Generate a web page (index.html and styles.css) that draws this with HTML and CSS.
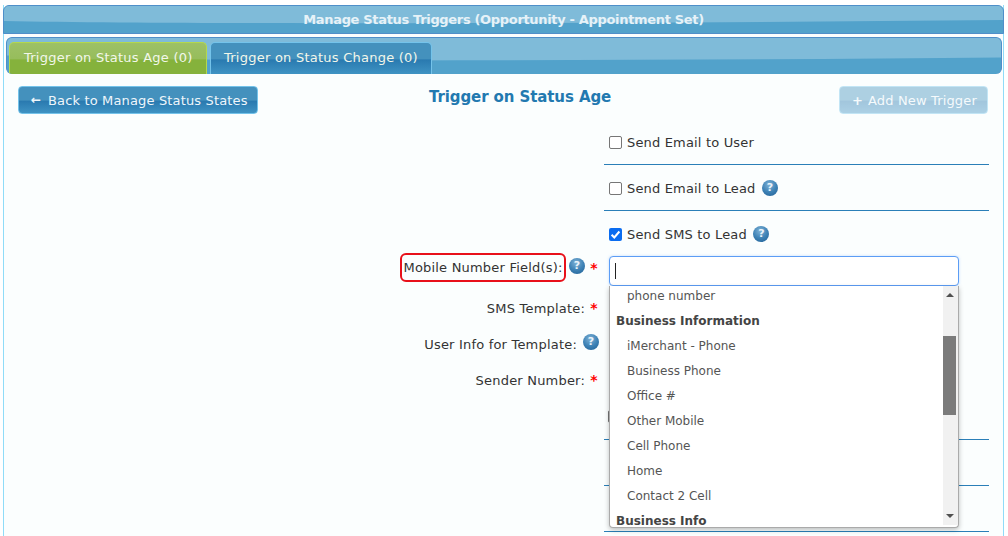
FILE: index.html
```html
<!DOCTYPE html>
<html lang="en">
<head>
<meta charset="utf-8">
<title>Manage Status Triggers</title>
<link rel="stylesheet" href="styles.css">
</head>
<body>
<div class="window">
  <div class="title-bar gloss">
    <svg class="wave" viewBox="0 0 1000 29" preserveAspectRatio="none"><path d="M0 0H1000V15C800 17 600 18.5 400 18.5C250 18.5 100 18 0 16Z" fill="#7fbbd9"/></svg>
    <span class="title-text">Manage Status Triggers (Opportunity - Appointment Set)</span>
  </div>
  <div class="panel">
    <div class="tabs gloss">
      <svg class="wave" viewBox="0 0 995 37" preserveAspectRatio="none"><path d="M0 0H995V20C800 22 600 23 400 23C250 23 100 22 0 18Z" fill="#7fbbd9"/></svg>
      <a class="tab tab-active">Trigger on Status Age (0)</a>
      <a class="tab tab-idle">Trigger on Status Change (0)</a>
    </div>
    <div class="toolbar">
      <a class="btn btn-back"><span class="btn-icon">←</span>Back to Manage Status States</a>
      <h2 class="section-title">Trigger on Status Age</h2>
      <a class="btn btn-add"><span class="btn-icon btn-plus">+</span>Add New Trigger</a>
    </div>
    <div class="form">
      <div class="check-row ruled"><span class="box"></span><span>Send Email to User</span></div>
      <div class="check-row ruled"><span class="box"></span><span>Send Email to Lead</span><span class="help">?</span></div>
      <div class="check-row sms-row"><span class="box box-on"><svg viewBox="0 0 13 13" width="13" height="13"><path d="M2.6 6.8 5.3 9.5 10.4 3.5" fill="none" stroke="#fff" stroke-width="2"/></svg></span><span>Send SMS to Lead</span><span class="help">?</span></div>

      <div class="field-row mobile-row">
        <div class="label-cell">
          <span class="label-mark">Mobile Number Field(s):</span><span class="help help-label help-tight">?</span><span class="star star-up">*</span>
        </div>
        <div class="control-cell">
          <div class="select-input"><span class="caret"></span></div>
        </div>
        <div class="dropdown">
          <ul class="options">
            <li class="opt">phone number</li>
            <li class="group">Business Information</li>
            <li class="opt">iMerchant - Phone</li>
            <li class="opt">Business Phone</li>
            <li class="opt">Office #</li>
            <li class="opt">Other Mobile</li>
            <li class="opt">Cell Phone</li>
            <li class="opt">Home</li>
            <li class="opt">Contact 2 Cell</li>
            <li class="group">Business Info</li>
          </ul>
          <div class="scrollbar">
            <span class="arrow arrow-up"></span>
            <span class="thumb"></span>
            <span class="arrow arrow-down"></span>
          </div>
        </div>
      </div>
      <div class="field-row sms-template"><div class="label-cell"><span>SMS Template:</span><span class="star">*</span></div></div>
      <div class="field-row user-info"><div class="label-cell"><span>User Info for Template:</span><span class="help help-label">?</span></div></div>
      <div class="field-row sender"><div class="label-cell"><span>Sender Number:</span><span class="star">*</span></div></div>
      <div class="check-row ruled tall"><span class="box box-behind"></span></div>
      <div class="check-row ruled"></div>
      <div class="check-row ruled"></div>
    </div>
  </div>
</div>
</body>
</html>
```
FILE: styles.css
```css
* { box-sizing: border-box; }
html, body { margin: 0; padding: 0; }
body {
  height: 536px;
  overflow: hidden;
  background: #fff;
  font-family: "DejaVu Sans", Verdana, sans-serif;
  font-size: 13px;
  letter-spacing: .2px;
  color: #333;
}
.window {
  margin: 5px 4px 0 3px;
  height: 531px;
  border-right: 1px solid #8fdcf8;
  border-left: 1px solid #8fdcf8;
  background: #fbfefe;
}
.gloss { position: relative; background: #52a2cb; border: 1px solid #4f8fc9; overflow: hidden; }
.wave { position: absolute; inset: 0; width: 100%; height: 100%; }
.title-bar {
  margin: 0 -1px;
  height: 29px;
  border-radius: 6px 6px 0 0;
  display: flex;
  align-items: center;
  justify-content: center;
}
.title-text { position: relative; font-weight: bold; color: #e6f2f8; font-size: 13px; letter-spacing: -.33px; }
.panel { padding: 3px 1px 0 2px; }
.tabs {
  height: 37px;
  border-radius: 6px;
  display: flex;
  align-items: flex-end;
  gap: 3px;
  padding-left: 2px;
  border-bottom: 0;
}
.tab {
  position: relative;
  height: 32px;
  border-radius: 5px 5px 0 0;
  color: #f2f7ea;
  display: flex;
  align-items: center;
  padding: 0 13px 2px 14px;
  white-space: nowrap;
}
.tab-active {
  width: 198px;
  letter-spacing: .24px;
  background: linear-gradient(#9dc166 0, #97bd5c 50%, #85b23c 55%, #85b23c 100%);
  border: 1px solid #b4d84c;
  border-bottom: 0;
}
.tab-idle {
  width: 222px;
  padding-left: 13px;
  letter-spacing: .24px;
  background: linear-gradient(#4491bd 0, #4491bd 50%, #2a7ab0 55%, #3f93c3 100%);
  border: 1px solid #74c3ea;
  border-bottom: 0;
}
.toolbar {
  display: flex;
  align-items: flex-start;
  padding: 12px 14px 0 12px;
  height: 45px;
}
.btn {
  height: 28px;
  border-radius: 4px;
  display: flex;
  align-items: center;
  color: #eef6fb;
  background: linear-gradient(#4491bd 0, #4491bd 50%, #2a7ab0 55%, #3f93c3 100%);
  border: 1px solid #74c3ea;
  padding-left: 12px;
  white-space: nowrap;
  letter-spacing: .15px;
}
.btn-back { width: 240px; }
.btn-add { width: 149px; opacity: .42; margin-left: auto; }
.btn-icon { width: 17px; font-size: 12px; font-weight: bold; }
.btn-plus { font-size: 13px; width: 16px; }
.section-title {
  margin: 1px 0 0 171px;
  font-size: 15px;
  line-height: 20px;
  font-weight: bold;
  letter-spacing: -.1px;
  color: #2279b0;
}
.form { display: flex; flex-direction: column; padding-right: 13px; }
.check-row {
  margin-left: 598px;
  height: 46px;
  display: flex;
  align-items: center;
  gap: 5px;
  padding-left: 5px;
  padding-top: 1px;
  letter-spacing: .17px;
}
.ruled { border-bottom: 1px solid #2a7fb8; }
.sms-row { height: 46px; padding-top: 0; }
.box {
  width: 13px;
  height: 13px;
  border: 1px solid #767676;
  border-radius: 2px;
  background: #fff;
  flex: none;
}
.box-on { background: #0a6cf0; border: 0; display: block; }
.box-on svg { display: block; }
.box-behind { margin-left: -1px; }
.help {
  width: 16px;
  height: 16px;
  flex: none;
  border-radius: 50%;
  background: radial-gradient(circle at 45% 30%, #7fb2d6 0, #3f83b6 50%, #1d5e94 100%);
  color: #e9f3fa;
  font-size: 11px;
  font-weight: bold;
  line-height: 16px;
  text-align: center;
  margin-left: 1.5px;
  letter-spacing: 0;
}
.field-row { position: relative; display: flex; align-items: center; }
.label-cell {
  width: 598px;
  flex: none;
  display: flex;
  justify-content: flex-end;
  align-items: center;
  gap: 4px;
  padding-right: 5px;
}
.mobile-row { height: 30px; margin-top: -1px; }
.sms-template { height: 44px; }
.user-info { height: 28px; }
.sender { height: 44px; }
.tall { height: 38px; padding-top: 0; padding-bottom: 8px; }
.label-mark {
  border: 2px solid #e8101a;
  border-radius: 6px;
  height: 29px;
  width: 166px;
  display: flex;
  align-items: center;
  justify-content: center;
  margin-top: -7px;
  white-space: nowrap;
}
.label-cell .help-label { margin: -4px 0 0 2px; }
.label-cell .help-tight { margin: -10px 0 0 -1px; }
.star { color: #f00; font-weight: bold; font-size: 14px; width: 10px; text-align: center; }
.star-up { margin-top: -6px; }
.control-cell { flex: 1; padding-left: 5px; }
.select-input {
  width: 350px;
  height: 30px;
  background: #fff;
  border: 1px solid #5c9df5;
  border-radius: 4px;
  box-shadow: 0 0 3px rgba(92,157,245,.35);
  display: flex;
  align-items: center;
  padding-left: 5px;
}
.caret { width: 1px; height: 16px; background: #222; }
.dropdown {
  position: absolute;
  z-index: 2;
  left: 603px;
  top: 30px;
  width: 350px;
  height: 242px;
  display: flex;
  background: #fff;
  border: 1px solid #aaa;
  border-top: 0;
  border-radius: 0 0 4px 4px;
  box-shadow: 0 2px 5px rgba(0,0,0,.25);
  overflow: hidden;
}
.options { flex: 1; list-style: none; margin: -2px 0 0; padding: 0; color: #555; font-size: 12px; letter-spacing: 0; }
.options li { height: 25px; line-height: 25px; white-space: nowrap; }
.opt { padding-left: 17px; }
.group { padding-left: 6px; font-weight: bold; color: #444; }
.scrollbar {
  width: 15px;
  flex: none;
  position: relative;
  background: #f1f1f1;
  margin-bottom: 2px;
}
.thumb { position: absolute; left: 0; right: 2px; top: 50px; height: 79px; background: #7b7b7b; }
.arrow { position: absolute; left: 3px; width: 0; height: 0; border-left: 4px solid transparent; border-right: 4px solid transparent; }
.arrow-up { top: 7px; border-bottom: 4px solid #505050; }
.arrow-down { bottom: 7px; border-top: 4px solid #505050; }
```
